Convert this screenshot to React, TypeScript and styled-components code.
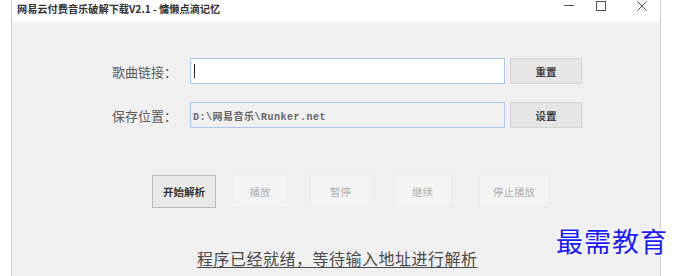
import styled, { createGlobalStyle } from "styled-components";

const GlobalStyle = createGlobalStyle`
  html, body {
    margin: 0;
    padding: 0;
    background: #ffffff;
  }
  body {
    font-family: "Noto Sans CJK SC", "Noto Sans", sans-serif;
  }
`;

const cjk = `"Noto Sans CJK SC", "Noto Sans", sans-serif`;

const Page = styled.div`
  position: relative;
  width: 679px;
  height: 276px;
  overflow: hidden;
  background: #ffffff;
`;

const Window = styled.div`
  margin-left: 11px;
  width: 648px;
  height: 276px;
  border-left: 1px solid #cfcfcf;
  border-right: 1px solid #cfcfcf;
  display: flex;
  flex-direction: column;
`;

const TitleBar = styled.div`
  height: 22px;
  background: #ffffff;
  display: flex;
  align-items: flex-start;
  justify-content: space-between;
`;

const Title = styled.div`
  padding: 2px 0 0 5px;
  font-family: ${cjk};
  font-size: 10.2px;
  font-weight: 700;
  line-height: 14px;
  color: #333;
`;

const Controls = styled.div`
  display: flex;
  padding: 1px 13px 0 0;
`;

const ControlBox = styled.div<{ $ml?: number }>`
  width: 10px;
  height: 10px;
  margin-left: ${(p) => p.$ml ?? 0}px;
  display: flex;
  align-items: center;
  justify-content: center;
`;

const Body = styled.div`
  flex: 1;
  background: #f0f0f0;
  padding: 36px 0 0 100px;
  display: flex;
  flex-direction: column;
`;

const FormRow = styled.div<{ $mt?: number }>`
  display: flex;
  align-items: center;
  height: 26px;
  margin-top: ${(p) => p.$mt ?? 0}px;
`;

const Label = styled.div`
  width: 78px;
  font-family: ${cjk};
  font-size: 13px;
  color: #5a5a5a;
`;

const Field = styled.div<{ $readonly?: boolean }>`
  box-sizing: border-box;
  width: 315px;
  height: 26px;
  border: 1px solid #a9c9ee;
  background: ${(p) => (p.$readonly ? "#f0f0f0" : "#ffffff")};
  display: flex;
  align-items: center;
  padding-left: 2px;
`;

const Caret = styled.div`
  width: 1px;
  height: 14px;
  background: #222;
  margin-left: 1px;
`;

const PathText = styled.span`
  font-family: "Liberation Mono", "Noto Sans CJK SC", monospace;
  font-size: 10px;
  letter-spacing: 0.5px;
  color: #666;
  font-weight: 700;
`;

const SideButton = styled.div`
  box-sizing: border-box;
  width: 72px;
  height: 26px;
  margin-left: 5px;
  border: 1px solid #d4d4d4;
  background: #e6e6e6;
  display: flex;
  align-items: center;
  justify-content: center;
  font-family: ${cjk};
  font-size: 10.5px;
  font-weight: 700;
  color: #444;
`;

const ActionRow = styled.div`
  display: flex;
  margin: 47px 0 0 40px;
`;

const ActionButton = styled.div<{ $w: number; $ml: number; $active?: boolean }>`
  box-sizing: border-box;
  width: ${(p) => p.$w}px;
  height: 33px;
  margin-left: ${(p) => p.$ml}px;
  border: 1px solid ${(p) => (p.$active ? "#b9b9b9" : "#ebebeb")};
  background: ${(p) => (p.$active ? "#e9e9e9" : "#f4f4f4")};
  display: flex;
  align-items: center;
  justify-content: center;
  font-family: ${cjk};
  font-size: 10.5px;
  font-weight: ${(p) => (p.$active ? 700 : 400)};
  color: ${(p) => (p.$active ? "#333" : "#b0b0b0")};
`;

const Status = styled.div`
  margin: 40px 0 0 85px;
  font-family: ${cjk};
  font-size: 16px;
  line-height: 20px;
  letter-spacing: 0.5px;
  color: #4a4a4a;
  text-decoration: underline;
  text-underline-offset: 2px;
`;

const Watermark = styled.div`
  position: absolute;
  left: 556px;
  top: 224px;
  font-family: ${cjk};
  font-size: 27px;
  letter-spacing: 1px;
  line-height: 34px;
  color: #1a1aff;
  text-shadow: 0 0 2px #fff, 0 0 3px #fff, 0 0 4px #fff;
`;

const actions = [
  { label: "开始解析", w: 64, ml: 0, active: true },
  { label: "播放", w: 56, ml: 16 },
  { label: "暂停", w: 61, ml: 22 },
  { label: "继续", w: 59, ml: 22 },
  { label: "停止播放", w: 70, ml: 27 },
];

export default function App() {
  return (
    <Page>
      <GlobalStyle />
      <Window>
        <TitleBar>
          <Title>网易云付费音乐破解下载V2.1 - 慵懒点滴记忆</Title>
          <Controls>
            <ControlBox>
              <svg width="10" height="10" viewBox="0 0 10 10">
                <line x1="0" y1="4.5" x2="10" y2="4.5" stroke="#555" strokeWidth="1" />
              </svg>
            </ControlBox>
            <ControlBox $ml={22}>
              <svg width="10" height="10" viewBox="0 0 10 10">
                <rect x="0.5" y="0.5" width="9" height="9" fill="none" stroke="#555" strokeWidth="1" />
              </svg>
            </ControlBox>
            <ControlBox $ml={31}>
              <svg width="10" height="10" viewBox="0 0 10 10">
                <path d="M0.5 0.5 L9.5 9.5 M9.5 0.5 L0.5 9.5" stroke="#555" strokeWidth="1" />
              </svg>
            </ControlBox>
          </Controls>
        </TitleBar>
        <Body>
          <FormRow>
            <Label>歌曲链接：</Label>
            <Field>
              <Caret />
            </Field>
            <SideButton>重置</SideButton>
          </FormRow>
          <FormRow $mt={18}>
            <Label>保存位置：</Label>
            <Field $readonly>
              <PathText>D:\网易音乐\Runker.net</PathText>
            </Field>
            <SideButton>设置</SideButton>
          </FormRow>
          <ActionRow>
            {actions.map((a) => (
              <ActionButton key={a.label} $w={a.w} $ml={a.ml} $active={a.active}>
                {a.label}
              </ActionButton>
            ))}
          </ActionRow>
          <Status>程序已经就绪，等待输入地址进行解析</Status>
        </Body>
      </Window>
      <Watermark>最需教育</Watermark>
    </Page>
  );
}
